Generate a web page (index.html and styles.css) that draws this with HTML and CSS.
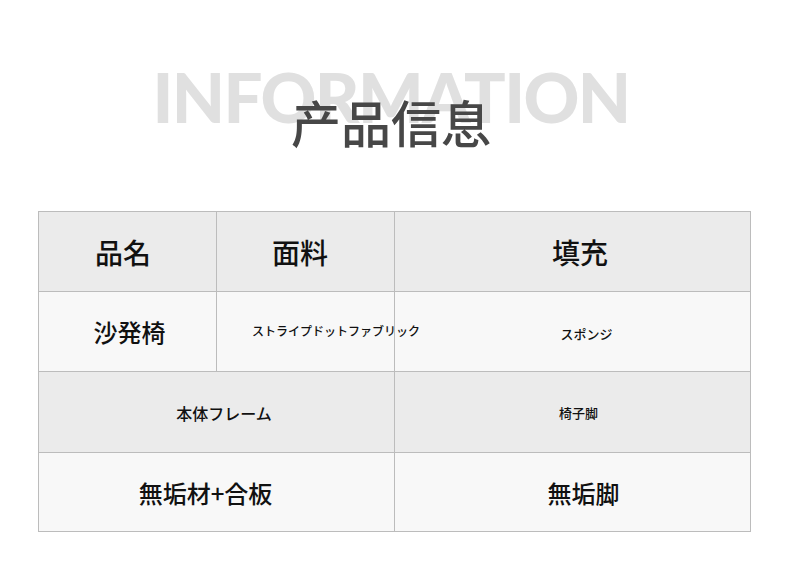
FILE: index.html
```html
<!DOCTYPE html>
<html lang="ja">
<head>
<meta charset="utf-8">
<link rel="stylesheet" href="styles.css">
</head>
<body>
<header class="head">
  <div class="en">INFORMATION</div>
  <h1 class="zh">产品信息</h1>
</header>
<div class="table">
  <div class="cell hd c1">品名</div>
  <div class="cell hd c2">面料</div>
  <div class="cell hd c3">填充</div>
  <div class="cell lt big r2a">沙発椅</div>
  <div class="cell lt small r2b">ストライプドットファブリック</div>
  <div class="cell lt mid r2c">スポンジ</div>
  <div class="cell dk med span2 r3a">本体フレーム</div>
  <div class="cell dk mid r3b">椅子脚</div>
  <div class="cell lt big span2 r4a">無垢材+合板</div>
  <div class="cell lt big r4b">無垢脚</div>
</div>
</body>
</html>
```

FILE: styles.css
```css
html, body {
  margin: 0;
  padding: 0;
  background: #ffffff;
}
body {
  font-family: "Noto Sans CJK JP", "Noto Sans", sans-serif;
  color: #111;
}
.head {
  display: grid;
  justify-items: center;
  padding-top: 57px;
  height: 154px;
  padding-right: 8px;
}
.en, .zh {
  grid-area: 1 / 1;
}
.en {
  font-family: "Lato", "Open Sans", sans-serif;
  font-weight: 900;
  font-size: 69px;
  line-height: 80px;
  color: #e0e0e0;
  letter-spacing: -1.6px;
}
.zh {
  margin: 0;
  margin-top: 34px;
  font-family: "Noto Sans CJK SC", sans-serif;
  font-weight: 500;
  font-size: 50px;
  line-height: 60px;
  color: #474747;
}
.table {
  margin-left: 38px;
  width: 711px;
  display: grid;
  grid-template-columns: 177px 177px 355px;
  grid-template-rows: 79px 79px 80px 78px;
  gap: 1px;
  padding: 1px;
  background: #bcbcbc;
}
.cell {
  display: flex;
  align-items: center;
  justify-content: center;
  white-space: nowrap;
  min-width: 0;
  font-weight: 500;
}
.span2 { grid-column: span 2; }
.hd { background: #ebebeb; font-size: 28px; padding-top: 1px; }
.dk { background: #ebebeb; }
.lt { background: #f8f8f8; }
.big { font-size: 24px; }
.mid { font-size: 13px; }
.med { font-size: 16px; }
.small { font-size: 12px; }
.c1 { padding-right: 9px; }
.c2 { padding-right: 11px; }
.c3 { padding-left: 15px; }
.r2a { padding-left: 4px; }
.r2b { justify-content: flex-start; padding-left: 35px; padding-bottom: 2px; overflow: visible; z-index: 1; }
.r2c { padding-left: 28px; padding-top: 3px; }
.r3a { padding-left: 15px; padding-top: 1px; }
.r3b { padding-left: 12px; }
.r4a { padding-right: 22px; padding-top: 1px; }
.r4b { padding-left: 22px; }
```
